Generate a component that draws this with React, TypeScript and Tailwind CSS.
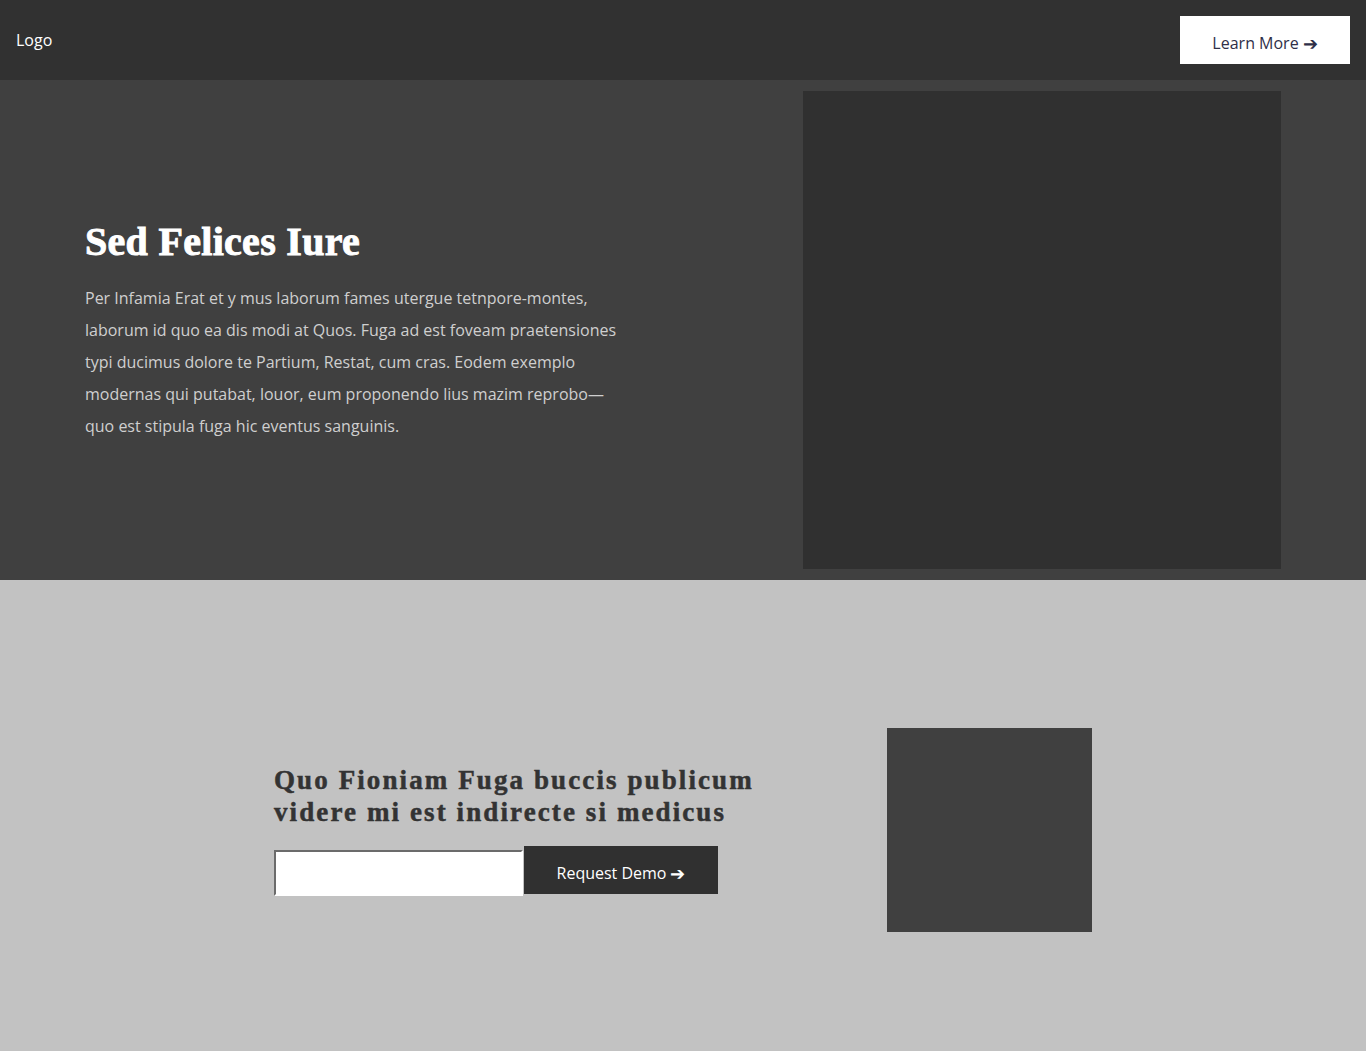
const App = () => {
  return (
    <div className="min-h-screen bg-[#c2c2c2] font-['Open_Sans','Noto_Sans',sans-serif]">
      {/* top bar */}
      <header className="h-20 bg-[#313131] flex items-center justify-between pl-4 pr-4">
        <span className="text-white text-base">Logo</span>
        <button className="bg-white h-12 w-[170px] pt-1.5 text-base text-[#2f2f48] flex items-center justify-center gap-1">
          Learn More <span className="text-lg leading-none">➔</span>
        </button>
      </header>

      {/* hero */}
      <section className="h-[500px] bg-[#404040] px-[85px] grid grid-cols-[3fr_2fr] items-center">
        <div className="max-w-[540px]">
          <h1 className="font-['Liberation_Serif',serif] font-bold text-[40px] leading-[48px] tracking-[0.3px] text-white [-webkit-text-stroke:0.9px_white]">
            Sed Felices Iure
          </h1>
          <p className="mt-[16px] text-base leading-8 text-[#cfcfcf]">
            Per Infamia Erat et y mus laborum fames utergue tetnpore-montes,
            laborum id quo ea dis modi at Quos. Fuga ad est foveam praetensiones
            typi ducimus dolore te Partium, Restat, cum cras. Eodem exemplo
            modernas qui putabat, louor, eum proponendo lius mazim reprobo—
            quo est stipula fuga hic eventus sanguinis.
          </p>
        </div>
        <div className="aspect-square w-full bg-[#303030]"></div>
      </section>

      {/* request demo */}
      <section className="h-[500px] flex items-center justify-center">
        <div className="w-[818px] flex items-center justify-between">
          <div>
            <h2 className="font-['Liberation_Serif',serif] font-bold text-[27px] leading-8 tracking-[2.1px] text-[#333333] [-webkit-text-stroke:0.5px_#333333]">
              Quo Fioniam Fuga buccis publicum
              <br />
              videre mi est indirecte si medicus
            </h2>
            <form
              onSubmit={(e) => e.preventDefault()}
              className="mt-[18px] flex items-start"
            >
              <input
                type="text"
                className="mt-1 w-[249px] h-[46px] bg-white border-t-2 border-l-2 border-r-2 border-b-2 border-t-[#6b6b6b] border-l-[#6b6b6b] border-r-white border-b-white outline-none"
              />
              <button
                type="submit"
                className="ml-px w-[194px] h-12 pt-1.5 bg-[#303030] text-white text-base flex items-center justify-center gap-1"
              >
                Request Demo <span className="text-lg leading-none">➔</span>
              </button>
            </form>
          </div>
          <div className="w-[205px] h-[204px] bg-[#404040]"></div>
        </div>
      </section>
    </div>
  );
};

export default App;
